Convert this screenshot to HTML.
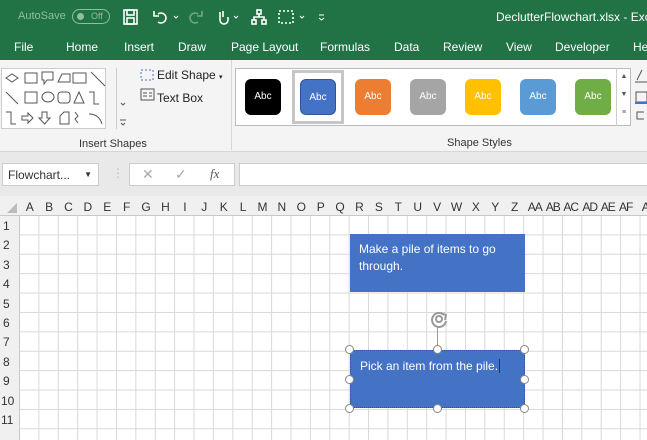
<!DOCTYPE html>
<html><head><meta charset="utf-8"><style>
*{margin:0;padding:0;box-sizing:border-box}
body{width:647px;height:440px;overflow:hidden;font-family:"Liberation Sans",sans-serif;background:#fff;position:relative}
.a{position:absolute}
.tb{left:0;top:0;width:647px;height:34px;background:#217346;color:#fff;overflow:hidden}
.tabs{left:0;top:34px;width:647px;height:26px;background:#217346;color:#fff;font-size:12px}
.tabs span{position:absolute;top:6px}
.rib{left:0;top:60px;width:647px;height:92px;background:#f4f4f4;border-bottom:1px solid #d6d6d6}
.fb{left:0;top:152px;width:647px;height:44px;background:#e9e9e9}
.sty{top:79px;width:36px;height:36px;border-radius:6px;color:#fff;font-size:10px;text-align:center;line-height:36px}
.colh{left:0;top:196px;width:647px;height:20px;background:#f0f0f0;border-bottom:1px solid #c8c8c8;font-size:12px;color:#333}
.colh span{position:absolute;top:4px;width:19.4px;text-align:center}
.rowh{left:0;top:216px;width:20px;height:224px;background:#f0f0f0;border-right:1px solid #c8c8c8}
.grid{left:20px;top:216px;width:627px;height:224px;
background-image:linear-gradient(to right,#d8d8d8 1px,transparent 1px),linear-gradient(to bottom,#d8d8d8 1px,transparent 1px);
background-size:19.4px 19.4px;background-position:18.4px 18.4px}
.shape{background:#4472c4;color:#fff;font-size:12px;padding:7px 9px;line-height:17px}
.h{width:9px;height:9px;border-radius:50%;background:#fff;border:1.5px solid #888}
</style></head><body>
<div class="a tb">
 <div class="a" style="left:18px;top:10px;font-size:11px;color:#8fbfa0">AutoSave</div>
 <div class="a" style="left:72px;top:9px;width:38px;height:15px;border:1px solid #8fbfa0;border-radius:8px;font-size:9px;color:#8fbfa0;padding-left:18px;line-height:13px">Off<div class="a" style="left:4px;top:3px;width:7px;height:7px;border-radius:50%;background:#8fbfa0"></div></div>
 <svg class="a" style="left:122px;top:8px" width="210" height="20" fill="none" stroke="#fff" stroke-width="1.6">
  <rect x="2" y="2" width="13" height="14"/><rect x="5" y="2" width="7" height="5"/><rect x="5" y="10" width="7" height="6"/>
  <path d="M36 6 a5 5 0 1 1 0 8 M32 3 v5 h5"/><path d="M52 8 l2 2 l2-2" stroke-width="1"/>
  <path d="M76 6 a5 5 0 1 0 0 8 M80 3 v5 h-5" stroke="#6fa88a"/>
  <path d="M98 4 v8 a4 4 0 0 0 8 0 v-3 M101 3 v6"/><path d="M112 8 l2 2 l2-2" stroke-width="1"/>
  <rect x="135" y="2" width="4" height="4"/><rect x="130" y="12" width="4" height="4"/><rect x="140" y="12" width="4" height="4"/><path d="M137 6 v3 M132 12 v-3 h10 v3"/>
  <rect x="157" y="3" width="14" height="12" stroke-dasharray="2 2"/><path d="M178 8 l2 2 l2-2" stroke-width="1"/>
  <path d="M197 7 h5 M197 10 l2.5 2 l2.5-2" stroke-width="1"/>
 </svg>
 <div class="a" style="left:496px;top:10px;font-size:12px;white-space:nowrap">DeclutterFlowchart.xlsx - Exc</div>
</div>
<div class="a tabs">
 <span style="left:14px">File</span><span style="left:66px">Home</span><span style="left:124px">Insert</span><span style="left:178px">Draw</span><span style="left:231px">Page Layout</span><span style="left:320px">Formulas</span><span style="left:394px">Data</span><span style="left:443px">Review</span><span style="left:506px">View</span><span style="left:555px">Developer</span><span style="left:633px">He</span>
</div>
<div class="a rib">
 <div class="a" style="left:1px;top:8px;width:105px;height:61px;background:#fff;border:1px solid #ccc"></div>
 <svg class="a" style="left:2px;top:8px" width="130" height="62" fill="none" stroke="#555" stroke-width="1">
  <path d="M4 10 l6-4 l6 4 l-6 4z"/><rect x="23" y="5" width="12" height="10"/><path d="M40 4 h11 v8 h-6 l-3 4 v-4 h-2z"/><path d="M56 14 l4-8 h8 v8z"/><rect x="71" y="5" width="13" height="10"/><path d="M89 4 l14 14"/>
  <path d="M4 24 l12 12"/><rect x="23" y="24" width="12" height="11"/><ellipse cx="46" cy="29" rx="6" ry="5"/><rect x="56" y="24" width="12" height="11" rx="3"/><path d="M72 35 l5-11 l5 11z"/><path d="M87 24 h5 v12 h5"/>
  <path d="M4 44 h5 v12 h5"/><path d="M20 48 h6 v-3 l5 5 l-5 5 v-3 h-6z"/><path d="M40 44 h5 v6 h3 l-5.5 6 l-5.5-6 h3z"/><path d="M58 56 v-8 l4-4 h5 v12z"/><path d="M73 44 l3 4 l-3 3 l3 4"/><path d="M87 46 q10 0 13 10"/>
  <path d="M119 35 l2 2 l2-2" stroke-width="1"/><path d="M118 52 h6 M119 55 l2 2 l2-2"/>
 </svg>
 <div class="a" style="left:116px;top:8px;width:14px;height:61px;border-left:1px solid #ccc"></div>
 <svg class="a" style="left:139px;top:7px" width="18" height="36" fill="none" stroke="#4472c4"><rect x="2" y="3" width="12" height="10" stroke-dasharray="2 2"/><rect x="2" y="22" width="13" height="11" stroke="#555"/><path d="M4 26h4 M4 29h4 M10 26h3 M10 29h3" stroke="#555"/></svg>
 <div class="a" style="left:157px;top:8px;font-size:12px;color:#222">Edit Shape <span style="font-size:7px">▾</span></div>
 <div class="a" style="left:157px;top:31px;font-size:12px;color:#222">Text Box</div>
 <div class="a" style="left:79px;top:78px;font-size:11px;color:#333">Insert Shapes</div>
 <div class="a" style="left:231px;top:0;width:1px;height:90px;background:#d6d6d6"></div>
 <div class="a" style="left:235px;top:8px;width:396px;height:58px;background:#fff;border:1px solid #bbb"></div>
 <div class="a" style="left:292px;top:10px;width:52px;height:54px;border:3px solid #c6c6c6"></div>
 <div class="a" style="left:616px;top:8px;width:15px;height:58px;border-left:1px solid #ccc;font-size:7px;color:#555;text-align:center;line-height:18px">▲<br>▼<br>≡</div>
 <div class="a" style="left:447px;top:77px;font-size:11px;color:#333">Shape Styles</div>
 <svg class="a" style="left:634px;top:6px" width="13" height="60" fill="none" stroke="#555"><path d="M3 14 l5-10 M1 16h12"/><rect x="2" y="26" width="11" height="10"/><path d="M1 37h12" stroke="#4472c4" stroke-width="2"/><path d="M10 46 h-7 v7 h7"/></svg>
</div>
<div class="a sty" style="left:245px;top:79px;background:#000">Abc</div>
<div class="a sty" style="left:300px;top:79px;background:#4472c4;border:1px solid #2f5597">Abc</div>
<div class="a sty" style="left:355px;top:79px;background:#ed7d31">Abc</div>
<div class="a sty" style="left:410px;top:79px;background:#a5a5a5">Abc</div>
<div class="a sty" style="left:465px;top:79px;background:#ffc000">Abc</div>
<div class="a sty" style="left:520px;top:79px;background:#5b9bd5">Abc</div>
<div class="a sty" style="left:575px;top:79px;background:#70ad47">Abc</div>
<div class="a fb">
 <div class="a" style="left:2px;top:11px;width:97px;height:23px;background:#fff;border:1px solid #ccc;font-size:12px;color:#333;padding:4px 5px">Flowchart... <span style="position:absolute;right:6px;font-size:8px;top:6px">▼</span></div>
 <div class="a" style="left:112px;top:14px;color:#bbb;font-size:12px">⋮</div>
 <div class="a" style="left:129px;top:11px;width:106px;height:23px;background:#fff;border:1px solid #ccc;font-size:14px;color:#aaa"><span class="a" style="left:12px;top:2px">✕</span><span class="a" style="left:45px;top:2px">✓</span><span class="a" style="left:80px;top:2px;font-family:'Liberation Serif';font-style:italic;font-size:13px;color:#555">fx</span></div>
 <div class="a" style="left:239px;top:11px;width:410px;height:23px;background:#fff;border:1px solid #ccc"></div>
</div>
<div class="a colh"><svg class="a" style="left:6px;top:6px" width="12" height="12"><path d="M11 1 V11 H1z" fill="#bbb"/></svg>
<span style="left:20px">A</span><span style="left:39.4px">B</span><span style="left:58.8px">C</span><span style="left:78.2px">D</span><span style="left:97.6px">E</span><span style="left:117px">F</span><span style="left:136.4px">G</span><span style="left:155.8px">H</span><span style="left:175.2px">I</span><span style="left:194.6px">J</span><span style="left:214px">K</span><span style="left:233.4px">L</span><span style="left:252.8px">M</span><span style="left:272.2px">N</span><span style="left:291.6px">O</span><span style="left:311px">P</span><span style="left:330.4px">Q</span><span style="left:349.8px">R</span><span style="left:369.2px">S</span><span style="left:388.6px">T</span><span style="left:408px">U</span><span style="left:427.4px">V</span><span style="left:446.8px">W</span><span style="left:466.2px">X</span><span style="left:485.6px">Y</span><span style="left:505px">Z</span><span style="left:525px;letter-spacing:-1px">AA</span><span style="left:543px;letter-spacing:-1px">AB</span><span style="left:561px;letter-spacing:-1px">AC</span><span style="left:580px;letter-spacing:-1px">AD</span><span style="left:598px;letter-spacing:-1px">AE</span><span style="left:616px;letter-spacing:-1px">AF</span><span style="left:636px">A</span>
</div>
<div class="a grid"></div>
<div class="a rowh"></div>
<div class="a" style="left:0;top:216px;width:20px;font-size:12px;color:#333">
<div class="a" style="left:3px;top:3px">1</div><div class="a" style="left:3px;top:22px">2</div><div class="a" style="left:3px;top:42px">3</div><div class="a" style="left:3px;top:61px">4</div><div class="a" style="left:3px;top:81px">5</div><div class="a" style="left:3px;top:100px">6</div><div class="a" style="left:3px;top:119px">7</div><div class="a" style="left:3px;top:139px">8</div><div class="a" style="left:3px;top:158px">9</div><div class="a" style="left:1px;top:178px">10</div><div class="a" style="left:1px;top:197px">11</div>
</div>
<div class="a shape" style="left:350px;top:234px;width:175px;height:58px">Make a pile of items to go through.</div>
<div class="a shape" style="left:350px;top:350px;width:175px;height:58px;border:1px dotted #2f5597">Pick an item from the pile.<span style="border-left:1px solid #333;margin-left:1px"></span></div>
<svg class="a" style="left:426px;top:307px" width="28" height="44" fill="none" stroke="#999" stroke-width="2"><path d="M18 8 a7 7 0 1 0 2 6"/><path d="M15 6 l5 2 l-1 5"/><circle cx="13" cy="12" r="3"/><path d="M11.5 19 V44" stroke-width="1"/></svg>
<div class="a h" style="left:345px;top:345px"></div><div class="a h" style="left:433px;top:345px"></div><div class="a h" style="left:520px;top:345px"></div>
<div class="a h" style="left:345px;top:375px"></div><div class="a h" style="left:520px;top:375px"></div>
<div class="a h" style="left:345px;top:404px"></div><div class="a h" style="left:433px;top:404px"></div><div class="a h" style="left:520px;top:404px"></div>
</body></html>
